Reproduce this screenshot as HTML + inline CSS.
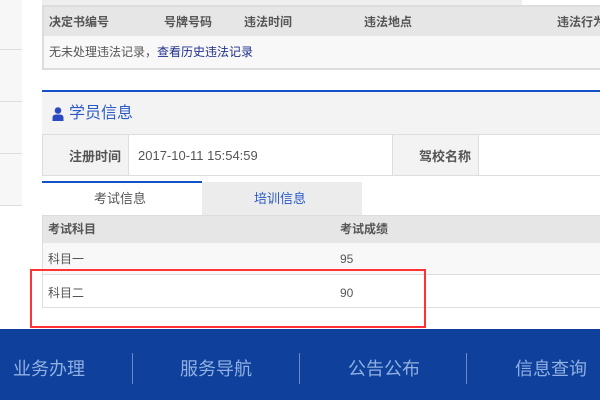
<!DOCTYPE html>
<html><head><meta charset="utf-8"><style>
*{margin:0;padding:0;box-sizing:border-box}
body{width:600px;height:400px;overflow:hidden;background:#fff;position:relative;font-family:"Liberation Sans","Noto Sans CJK SC",sans-serif;font-size:12px;color:#555}
div,span{position:absolute}
.t{white-space:nowrap;line-height:1}
.b{font-weight:bold}
</style></head><body>
<div style="left:0;top:0;width:22px;height:205px;background:#f7f7f7"></div>
<div style="left:0;top:49px;width:22px;height:1px;background:#ddd"></div>
<div style="left:0;top:101px;width:22px;height:1px;background:#ddd"></div>
<div style="left:0;top:153px;width:22px;height:1px;background:#ddd"></div>
<div style="left:0;top:205px;width:22px;height:1px;background:#ddd"></div>
<div style="left:42px;top:0;width:480px;height:5px;background:#eee"></div>
<div style="left:42px;top:5px;width:560px;height:65px;border:2px solid #ddd;background:#f8f8f8"></div>
<div style="left:44px;top:7px;width:560px;height:29px;background:#e6e6e6"></div>
<span class="t b" style="left:49px;top:16px">决定书编号</span>
<span class="t b" style="left:164px;top:16px">号牌号码</span>
<span class="t b" style="left:244px;top:16px">违法时间</span>
<span class="t b" style="left:364px;top:16px">违法地点</span>
<span class="t b" style="left:557px;top:16px">违法行为</span>
<span class="t" style="left:49px;top:46px">无未处理违法记录，<span style="position:static;color:#1f2f8a">查看历史违法记录</span></span>
<div style="left:42px;top:90px;width:560px;height:2px;background:#1450c8"></div>
<div style="left:42px;top:92px;width:560px;height:42px;background:#f3f3f3"></div>
<svg style="position:absolute;left:52px;top:107px" width="12" height="14" viewBox="0 0 12 14"><circle cx="6" cy="3.5" r="3.3" fill="#2a4bc0"/><path d="M0.5 14 V11 Q0.5 7.5 4 7.5 H8 Q11.5 7.5 11.5 11 V14Z" fill="#2a4bc0"/></svg>
<span class="t" style="left:69px;top:106px;font-size:16px;color:#2a5bc8">学员信息</span>
<div style="left:42px;top:134px;width:560px;height:42px;border:1px solid #ddd;background:#fff"></div>
<div style="left:43px;top:135px;width:86px;height:40px;background:#f3f3f3;border-right:1px solid #ddd"></div>
<div style="left:392px;top:135px;width:87px;height:40px;background:#f3f3f3;border-left:1px solid #ddd;border-right:1px solid #ddd"></div>
<span class="t b" style="left:69px;top:150px;font-size:13px">注册时间</span>
<span class="t" style="left:138px;top:149px;font-size:13px">2017-10-11 15:54:59</span>
<span class="t b" style="left:419px;top:150px;font-size:13px">驾校名称</span>
<div style="left:42px;top:181px;width:160px;height:2px;background:#1450c8"></div>
<div style="left:202px;top:182px;width:160px;height:33px;background:#ececec"></div>
<span class="t" style="left:94px;top:192px;font-size:13px">考试信息</span>
<span class="t" style="left:254px;top:192px;font-size:13px;color:#2a5bc8">培训信息</span>
<div style="left:42px;top:215px;width:560px;height:93px;border:1px solid #ddd;background:#fff"></div>
<div style="left:43px;top:216px;width:560px;height:27px;background:#e6e6e6"></div>
<div style="left:43px;top:243px;width:560px;height:32px;background:#f8f8f8;border-bottom:1px solid #ddd"></div>
<span class="t b" style="left:48px;top:223px">考试科目</span>
<span class="t b" style="left:340px;top:223px">考试成绩</span>
<span class="t" style="left:48px;top:253px">科目一</span>
<span class="t" style="left:340px;top:253px">95</span>
<span class="t" style="left:48px;top:287px">科目二</span>
<span class="t" style="left:340px;top:287px">90</span>
<div style="left:30px;top:269px;width:396px;height:59px;border:2px solid #f33"></div>
<div style="left:0;top:329px;width:600px;height:71px;background:#0f419c"></div>
<span class="t" style="left:13px;top:360px;font-size:18px;color:#8fb0e0">业务办理</span>
<span class="t" style="left:180px;top:360px;font-size:18px;color:#8fb0e0">服务导航</span>
<span class="t" style="left:348px;top:360px;font-size:18px;color:#8fb0e0">公告公布</span>
<span class="t" style="left:515px;top:360px;font-size:18px;color:#8fb0e0">信息查询</span>
<div style="left:132px;top:353px;width:1px;height:31px;background:#6a8ac8"></div>
<div style="left:299px;top:353px;width:1px;height:31px;background:#6a8ac8"></div>
<div style="left:466px;top:353px;width:1px;height:31px;background:#6a8ac8"></div>
</body></html>
